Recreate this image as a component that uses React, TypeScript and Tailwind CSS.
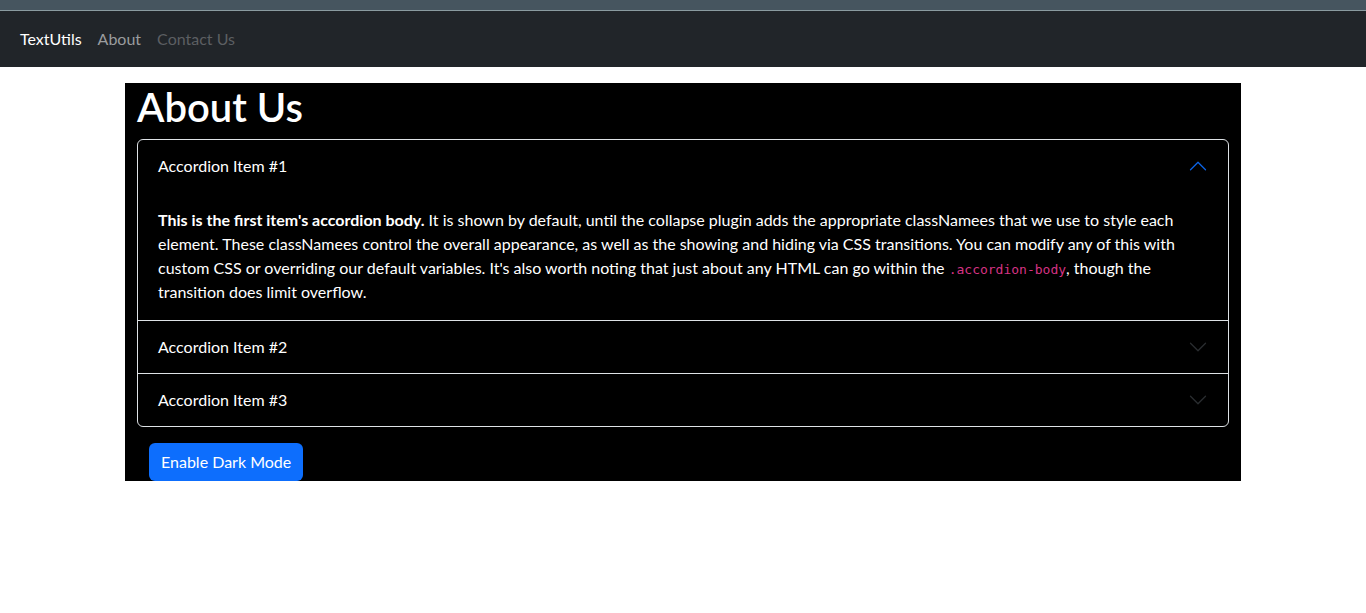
import React, { useState } from "react";

const Chevron = ({ open }: { open: boolean }) => (
  <svg
    viewBox="0 0 16 16"
    className={open ? "h-5 w-5 rotate-180 text-[#0c63e4]" : "h-5 w-5 text-[#2a2d30]"}
    fill="currentColor"
  >
    <path
      fillRule="evenodd"
      d="M1.646 4.646a.5.5 0 0 1 .708 0L8 10.293l5.646-5.647a.5.5 0 0 1 .708.708l-6 6a.5.5 0 0 1-.708 0l-6-6a.5.5 0 0 1 0-.708z"
    />
  </svg>
);

const items = ["Accordion Item #1", "Accordion Item #2", "Accordion Item #3"];

export default function App() {
  const [open, setOpen] = useState(0);

  return (
    <div className="min-h-screen bg-white font-['Lato',sans-serif] text-base">
      {/* window strip */}
      <div className="h-[10px] bg-[#46555f]" />
      <div className="h-px bg-[#8a9ba0]" />

      {/* Navbar */}
      <nav className="flex h-14 items-center gap-4 bg-[#212529] px-5">
        <span className="text-white">TextUtils</span>
        <span className="text-[#9a9c9e]">About</span>
        <span className="text-[#5c5f62]">Contact Us</span>
      </nav>

      {/* Content */}
      <div className="mx-auto mt-4 w-[1116px] bg-black px-3 text-white">
        <h1 className="mb-2 text-[40px] font-semibold leading-[48px]">About Us</h1>

        <div className="rounded-md border border-[#dee2e6]">
          {items.map((title, i) => (
            <div key={title} className={i > 0 ? "border-t border-[#dee2e6]" : ""}>
              <button
                onClick={() => setOpen(open === i ? -1 : i)}
                className="flex h-[52px] w-full items-center justify-between px-5 text-left"
              >
                <span>{title}</span>
                <Chevron open={open === i} />
              </button>
              {open === i && (
                <div className="px-5 pt-4 pb-4 leading-6">
                  <strong>This is the first item's accordion body.</strong> It is shown by default,
                  until the collapse plugin adds the appropriate classNamees that we use to style each
                  element. These classNamees control the overall appearance, as well as the showing and
                  hiding via CSS transitions. You can modify any of this with custom CSS or overriding
                  our default variables. It's also worth noting that just about any HTML can go within
                  the{" "}
                  <code className="font-['DejaVu_Sans_Mono',monospace] text-[13px] leading-none text-[#d63384]">
                    .accordion-body
                  </code>
                  , though the transition does limit overflow.
                </div>
              )}
            </div>
          ))}
        </div>

        <button className="ml-3 mt-4 h-[38px] rounded-md bg-[#0d6efd] px-3 text-white">
          Enable Dark Mode
        </button>
      </div>
    </div>
  );
}
